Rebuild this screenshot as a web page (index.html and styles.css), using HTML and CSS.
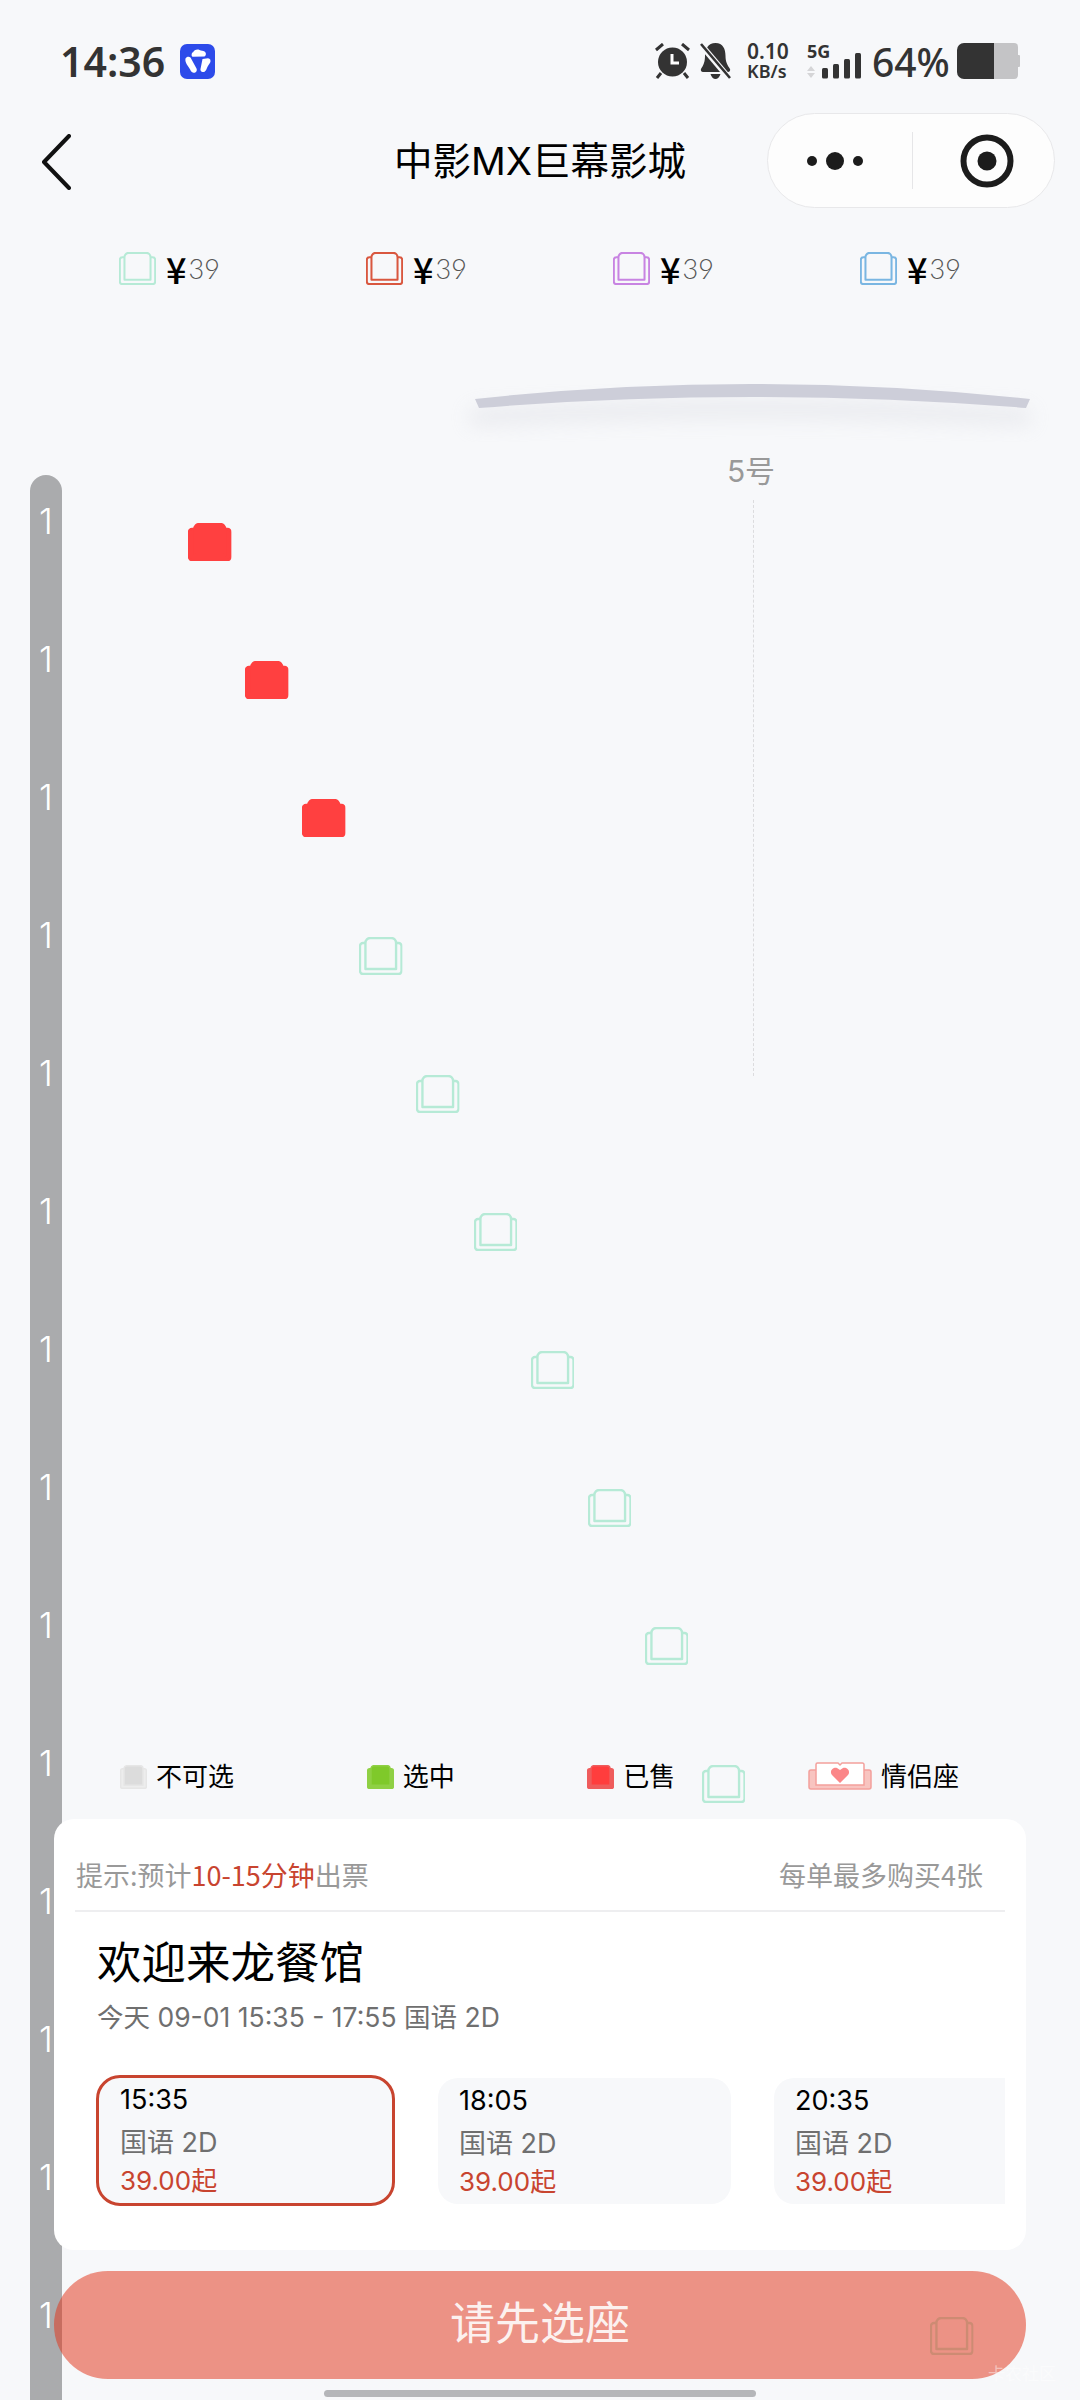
FILE: index.html
```html
<!DOCTYPE html>
<html lang="zh-CN">
<head>
    <meta charset="UTF-8">
    <meta name="viewport" content="width=device-width, initial-scale=1.0">
    <title>中影MX巨幕影城</title>
    <link rel="stylesheet" href="styles.css">
</head>
<body>
    <svg class="defs" width="0" height="0">
        <symbol id="seat" viewBox="0 0 44 38" preserveAspectRatio="none">
            <path class="seat-arm" d="M7 6H4a3 3 0 0 0-3 3v25a3 3 0 0 0 3 3h36a3 3 0 0 0 3-3V9a3 3 0 0 0-3-3h-3"/>
            <path class="seat-back" d="M6.500 32V6a5 5 0 0 1 5-5h21a5 5 0 0 1 5 5v26z"/>
        </symbol>
    </svg>

    <div class="page">
        <div class="status-bar">
            <span class="clock">14:36</span>
            <svg class="app-badge" viewBox="0 0 35 35">
                <rect width="35" height="35" rx="7" fill="#2d4bea"/>
                <path fill="#fff" d="M13 8.500c1-2.500 4-3.500 6.500-2.500 2 .8 3.500.5 5 1.500 2 1.300 1.800 4 0 5l-12 .3c-1.500-.8-.8-3-.3-4.300zM5.500 14.500c1-2 3.500-2.500 5-1l6 11c1 2-.5 4.500-3 4.300-2-.2-2.700-2-3.500-3.500-1.300-2.800-5.500-6.500-4.500-10.800zM22.500 15l5.500-.8c2.200 0 3 2.300 2.300 4-.8 2-2.300 3-3 5-.8 2.200-2 5.300-4.800 4.800-2-.4-2.500-2.300-1.800-4z"/>
            </svg>
            <div class="status-right">
                <svg class="ic-alarm" viewBox="0 0 37 36">
                    <circle cx="18.500" cy="19" r="14.500" fill="#333"/>
                    <path d="M18 11v9h7" fill="none" stroke="#fff" stroke-width="3"/>
                    <path d="M9 1 2 7M28 1l7 6M7 30l-4 5M30 30l4 5" fill="none" stroke="#333" stroke-width="3"/>
                </svg>
                <svg class="ic-bell" viewBox="0 0 31 36">
                    <path fill="#333" d="M15.500 0C23 0 25.500 6 25.500 13c0 6 2 9 4.500 13 .6 1.500-.3 3-2 3H3c-1.700 0-2.600-1.500-2-3 2.500-4 4-7 4-13C5 6 8 0 15.500 0zM10.500 31h10c-.8 3-3 5-5 5s-4.200-2-5-5z"/>
                    <path d="M2 3l27 32" stroke="#f7f8fa" stroke-width="6"/>
                    <path d="M1 1l29 34" stroke="#333" stroke-width="2.600"/>
                </svg>
                <div class="net-speed"><span>0.10</span><span class="net-unit">KB/s</span></div>
                <div class="signal">
                    <span class="signal-type">5G</span>
                    <svg class="signal-bars" viewBox="0 0 54 26">
                        <path d="M0 18l4-5 4 5zM0 20l4 5 4-5z" fill="#d5d5d7"/>
                        <rect x="15" y="15" width="6" height="10.500" rx="1.500" fill="#333"/>
                        <rect x="26" y="11" width="6" height="14.500" rx="1.500" fill="#333"/>
                        <rect x="37" y="6" width="6" height="19.500" rx="1.500" fill="#333"/>
                        <rect x="48" y="0" width="6" height="25.500" rx="1.500" fill="#333"/>
                    </svg>
                </div>
                <span class="battery-pct">64%</span>
                <svg class="ic-battery" viewBox="0 0 63 36">
                    <path d="M37 0h20a4 4 0 0 1 4 4v28a4 4 0 0 1-4 4H37z" fill="#c4c4c6"/>
                    <path d="M61 12h1a1 1 0 0 1 1 1v10a1 1 0 0 1-1 1h-1z" fill="#c4c4c6"/>
                    <path d="M37 0H7a7 7 0 0 0-7 7v22a7 7 0 0 0 7 7h30z" fill="#333"/>
                </svg>
            </div>
        </div>

        <div class="nav">
            <svg class="nav-back" viewBox="0 0 30 56">
                <path d="M28 2 3 28l25 26" fill="none" stroke="#111" stroke-width="4" stroke-linecap="round" stroke-linejoin="round"/>
            </svg>
            <div class="nav-title">中影MX巨幕影城</div>
            <div class="capsule">
                <svg class="capsule-more" viewBox="0 0 58 18">
                    <circle cx="5" cy="9" r="5" fill="#1c1c1c"/>
                    <circle cx="28" cy="9" r="9" fill="#1c1c1c"/>
                    <circle cx="51" cy="9" r="5" fill="#1c1c1c"/>
                </svg>
                <span class="capsule-line"></span>
                <svg class="capsule-target" viewBox="0 0 54 54">
                    <circle cx="27" cy="27" r="23.500" fill="none" stroke="#1c1c1c" stroke-width="6"/>
                    <circle cx="27" cy="27" r="9.500" fill="#1c1c1c"/>
                </svg>
            </div>
        </div>

        <div class="prices">
            <div class="price"><svg class="price-seat seat-green"><use href="#seat"/></svg><span class="yen">¥</span><span class="amount">39</span></div>
            <div class="price"><svg class="price-seat seat-red"><use href="#seat"/></svg><span class="yen">¥</span><span class="amount">39</span></div>
            <div class="price"><svg class="price-seat seat-purple"><use href="#seat"/></svg><span class="yen">¥</span><span class="amount">39</span></div>
            <div class="price"><svg class="price-seat seat-blue"><use href="#seat"/></svg><span class="yen">¥</span><span class="amount">39</span></div>
        </div>

        <svg class="screen" viewBox="0 0 600 90">
            <defs>
                <filter id="screenBlur" x="-10%" y="-60%" width="120%" height="220%"><feGaussianBlur stdDeviation="10"/></filter>
            </defs>
            <path d="M20 33Q300 15 580 33V50Q300 34 20 50z" fill="#c9cad4" opacity=".3" filter="url(#screenBlur)" transform="translate(0 10)"/>
            <path d="M25 33Q300 3 580 33L576 42Q300 20 29 42z" fill="#cdced9"/>
        </svg>

        <div class="hall">
            <div class="row-bar">
                <span>1</span><span>1</span><span>1</span><span>1</span><span>1</span><span>1</span><span>1</span>
                <span>1</span><span>1</span><span>1</span><span>1</span><span>1</span><span>1</span><span>1</span>
            </div>
            <div class="center-mark">
                <span class="hall-no">5号</span>
                <span class="center-line"></span>
            </div>
            <svg class="seat seat-sold" style="--i:0"><use href="#seat"/></svg>
            <svg class="seat seat-sold" style="--i:1"><use href="#seat"/></svg>
            <svg class="seat seat-sold" style="--i:2"><use href="#seat"/></svg>
            <svg class="seat seat-green" style="--i:3"><use href="#seat"/></svg>
            <svg class="seat seat-green" style="--i:4"><use href="#seat"/></svg>
            <svg class="seat seat-green" style="--i:5"><use href="#seat"/></svg>
            <svg class="seat seat-green" style="--i:6"><use href="#seat"/></svg>
            <svg class="seat seat-green" style="--i:7"><use href="#seat"/></svg>
            <svg class="seat seat-green" style="--i:8"><use href="#seat"/></svg>
            <svg class="seat seat-green" style="--i:9"><use href="#seat"/></svg>
            <svg class="seat seat-green" style="--i:13"><use href="#seat"/></svg>
        </div>
    </div>

    <div class="bottom">
        <div class="legend">
            <div class="legend-item"><svg class="legend-seat seat-off"><use href="#seat"/></svg>不可选</div>
            <div class="legend-item"><svg class="legend-seat seat-picked"><use href="#seat"/></svg>选中</div>
            <div class="legend-item"><svg class="legend-seat seat-taken"><use href="#seat"/></svg>已售</div>
            <div class="legend-item">
                <svg class="legend-couple" viewBox="0 0 64 28">
                    <path d="M8 8H3a2 2 0 0 0-2 2v15a2 2 0 0 0 2 2h58a2 2 0 0 0 2-2V10a2 2 0 0 0-2-2h-5" fill="#f8c4c0" stroke="#f3a09c" stroke-width="1.500"/>
                    <path d="M8 23V2.500A1.500 1.500 0 0 1 9.500 1H30l2 2 2-2h20.500A1.500 1.500 0 0 1 56 2.500V23z" fill="#fff" stroke="#f3a09c" stroke-width="1.500"/>
                    <path d="M32 21 24 13c-3-4 1-8 5-7l3 2 3-2c4-1 8 3 5 7z" fill="#fb8688"/>
                </svg>
                情侣座
            </div>
        </div>

        <div class="panel">
            <div class="tips">
                <span>提示:预计<em>10-15分钟</em>出票</span>
                <span>每单最多购买4张</span>
            </div>
            <div class="movie-name">欢迎来龙餐馆</div>
            <div class="movie-time">今天 09-01 15:35 - 17:55 国语 2D</div>
            <div class="shows">
                <div class="show show-active">
                    <div class="show-time">15:35</div>
                    <div class="show-lang">国语 2D</div>
                    <div class="show-price">39.00起</div>
                </div>
                <div class="show">
                    <div class="show-time">18:05</div>
                    <div class="show-lang">国语 2D</div>
                    <div class="show-price">39.00起</div>
                </div>
                <div class="show">
                    <div class="show-time">20:35</div>
                    <div class="show-lang">国语 2D</div>
                    <div class="show-price">39.00起</div>
                </div>
            </div>
        </div>

        <button class="submit" type="button">请先选座</button>
        <div class="home-bar"></div>
    </div>

    <div class="watermark">卡农社区</div>
</body>
</html>
```

FILE: styles.css
```css
html, body { margin: 0; padding: 0; }
body { position: relative; width: 1080px; height: 2400px; overflow: hidden; background: #f7f8fa; color: #000; font-family: Inter, "Noto Sans CJK SC", sans-serif; }
.defs { position: absolute; }

/* status bar */
.status-bar { display: flex; align-items: center; height: 102px; padding: 10px 60px 0 60px; color: #333; }
.clock { font-size: 41px; font-weight: 560; width: 120px; font-family: "Noto Sans", sans-serif; }
.app-badge { width: 35px; height: 35px; }
.status-right { display: flex; align-items: center; margin-left: auto; margin-right: 0; }
.ic-alarm { width: 37px; height: 36px; }
.ic-bell { width: 31px; height: 36px; margin-left: 9px; }
.net-speed { display: flex; flex-direction: column; margin-left: 16px; width: 44px; font-family: "Noto Sans", sans-serif; font-weight: 600; font-size: 21px; line-height: 20px; }
.net-unit { font-size: 18px; }
.signal { display: flex; flex-direction: column; margin-left: 16px; width: 54px; }
.signal-type { font-family: "Noto Sans", sans-serif; font-size: 18px; font-weight: 700; line-height: 16px; height: 16px; }
.signal-bars { width: 54px; height: 26px; margin-top: -6px; }
.battery-pct { font-family: "Noto Sans", sans-serif; font-size: 39px; font-weight: 500; margin-left: 11px; width: 85px; }
.ic-battery { width: 63px; height: 36px; }

/* nav */
.nav { display: grid; grid-template-columns: 1fr auto 1fr; align-items: center; height: 95px; padding: 0 25px; }
.nav-back { width: 30px; height: 56px; margin: 2px 0 0 16px; }
.nav-title { font-size: 38.5px; line-height: 95px; padding-top: 2px; }
.capsule { justify-self: end; display: flex; align-items: center; width: 288px; height: 95px; box-sizing: border-box; border: 1px solid #e8e8ea; border-radius: 48px; background: #fdfdfd; }
.capsule-more { width: 58px; height: 18px; margin-left: 39px; }
.capsule-line { width: 1px; height: 57px; margin-left: 47px; background: #e6e6e8; }
.capsule-target { width: 54px; height: 54px; margin-left: 47px; }

/* seat colours */
.seat-back { fill: var(--seat-fill, none); stroke: var(--seat-line, currentColor); stroke-width: 2.4; stroke-linejoin: round; }
.seat-arm { fill: var(--seat-arm, none); stroke: var(--seat-line, currentColor); stroke-width: 2.4; stroke-linejoin: round; }
.seat-green { color: #b6ead6; }
.seat-red { color: #d9573f; }
.seat-purple { color: #c884e2; }
.seat-blue { color: #7ab6e2; }
.seat-sold { --seat-fill: #ff4040; --seat-arm: #ff4040; --seat-line: #ff4040; }
.seat-off { --seat-fill: #dcdcdc; --seat-arm: #ededed; --seat-line: #e6e6e6; }
.seat-picked { --seat-fill: #7fc92a; --seat-arm: #8fd044; --seat-line: #8fd044; }
.seat-taken { --seat-fill: #ff3d3d; --seat-arm: #ef5c5c; --seat-line: #ef5c5c; }

/* prices */
.prices { display: flex; margin-top: 45px; padding-left: 119px; }
.price { flex: none; display: flex; align-items: center; width: 247px; height: 33px; }
.price-seat { width: 37px; height: 33px; margin-right: 10px; }
.yen { font-family: "Noto Sans CJK SC", sans-serif; font-size: 36px; font-weight: 500; line-height: 33px; }
.amount { font-family: Lato, sans-serif; font-size: 27px; font-weight: 300; color: #555; margin-left: 2px; }

/* screen + seat map */
.screen { display: block; width: 600px; height: 90px; margin: 81px 0 0 450px; }
.hall { position: relative; height: 1925px; margin-top: 19px; }
.row-bar { display: flex; flex-direction: column; gap: 98px; width: 32px; height: 100%; box-sizing: border-box; margin-left: 30px; padding-top: 26px; background: #aaabad; border-radius: 16px 16px 0 0; overflow: hidden; }
.row-bar span { flex: none; height: 40px; line-height: 40px; text-align: center; color: #fff; font-size: 35px; font-weight: 300; }
.center-mark { position: absolute; left: 703px; top: -22px; display: flex; flex-direction: column; align-items: center; width: 96px; }
.hall-no { font-size: 30px; line-height: 36px; color: #999; }
.center-line { width: 0; height: 576px; margin-top: 11px; margin-left: 4px; border-left: 1px dashed #dcdcde; }
.seat { position: absolute; width: 43.500px; height: 38px; left: calc(188px + var(--i) * 57.1px); top: calc(48px + var(--i) * 138px); }

/* bottom sheet */
.bottom { position: absolute; left: 0; right: 0; top: 1762px; padding: 0 54px; }
.legend { display: flex; justify-content: space-between; height: 57px; padding: 0 67px 0 66px; }
.legend-item { display: flex; align-items: flex-start; font-family: "Noto Sans CJK SC", sans-serif; font-size: 26px; line-height: 26px; }
.legend-seat { width: 27px; height: 24px; margin: 3px 9px 0 0; }
.legend-couple { width: 64px; height: 28px; margin-right: 9px; }

.panel { box-sizing: border-box; height: 431px; padding: 0 21px; background: #fff; border-radius: 20px; font-family: "Noto Sans CJK SC", sans-serif; }
.tips { display: flex; justify-content: space-between; height: 93px; box-sizing: border-box; padding: 38px 22px 0 1px; border-bottom: 2px solid #eeeef0; font-size: 27px; line-height: 36px; color: #999; }
.tips em { font-style: normal; color: #c8442f; }
.movie-name { margin: 18px 0 0 22px; font-size: 44.5px; line-height: 60px; }
.movie-time { margin: 8px 0 0 22px; font-size: 26.5px; line-height: 38px; color: #6f6f6f; font-family: Inter, "Noto Sans CJK SC", sans-serif; }
.shows { display: flex; align-items: center; gap: 43px; margin-top: 39px; overflow: hidden; height: 131px; padding-left: 21px; font-family: Inter, "Noto Sans CJK SC", sans-serif; }
.show { flex: none; box-sizing: border-box; width: 293px; height: 126px; padding: 6px 21px; border-radius: 20px; background: #f7f8fa; }
.show-active { width: 299px; height: 131px; padding: 5px 21px; border: 3px solid #c8442f; border-radius: 24px; }
.show-time { font-size: 27px; line-height: 34px; }
.show-lang { margin-top: 7px; font-size: 27px; line-height: 38px; color: #6f6f6f; }
.show-price { margin-top: 1px; font-size: 26px; line-height: 36px; color: #c8442f; }

.submit { display: block; width: 100%; height: 108px; margin-top: 21px; padding: 0 0 10px; border: none; border-radius: 54px; background: rgba(227, 52, 25, 0.52); color: rgba(255, 255, 255, 0.88); font-family: "Noto Sans CJK SC", sans-serif; font-size: 45px; }
.home-bar { width: 432px; height: 7px; margin: 11px auto 0; background: #b5b6b9; border-radius: 4px; }
.watermark { position: absolute; left: 988px; top: 2360px; font-family: "Noto Sans CJK SC", sans-serif; font-size: 17px; color: rgba(255, 255, 255, 0.45); }
```
